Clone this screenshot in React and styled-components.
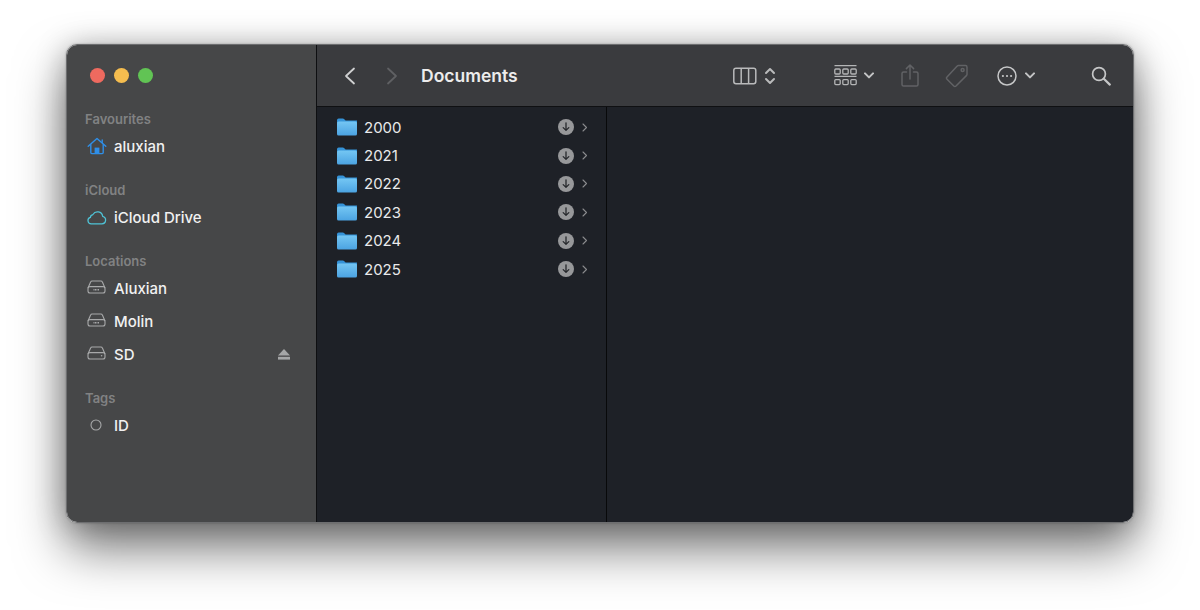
import React from "react";
import styled, { createGlobalStyle } from "styled-components";

const Global = createGlobalStyle`
  html, body { margin: 0; padding: 0; background: #fff; }
  body { width: 1200px; height: 610px; overflow: hidden; font-family: Inter, "Liberation Sans", sans-serif; }
`;
const Page = styled.div`
  width: 1200px; height: 610px; box-sizing: border-box; padding: 44px 66px 87px;
`;
const Window = styled.div`
  height: 479px; display: flex; border-radius: 11px; overflow: hidden; box-sizing: border-box;
  border: 1px solid #6d6e70;
  box-shadow: 0 26px 50px rgba(0,0,0,.52), 0 2px 30px rgba(0,0,0,.26), 0 0 2px rgba(0,0,0,.3);
`;
const Sidebar = styled.aside`
  width: 250px; flex: none; background: #464748; box-sizing: border-box;
  border-right: 1px solid #0e0f11; display: flex; flex-direction: column;
  padding: 23px 0 0 18px;
`;
const Lights = styled.div`display: flex; gap: 9px; padding-left: 5px; height: 41px;`;
const Light = styled.span`
  width: 15px; height: 15px; border-radius: 50%; background: ${p => p.$c};
`;
const Section = styled.section`display: flex; flex-direction: column; margin-bottom: 17px;`;
const Label = styled.div`
  height: 21px; line-height: 21px; font-size: 13px; font-weight: 600; color: #818283;
`;
const Row = styled.div`
  height: 33px; box-sizing: border-box; padding: 0 26px 1px 0; display: flex; align-items: center;
  font-size: 15px; font-weight: 500; color: #f1f1f1;
`;
const RowIcon = styled.span`
  width: 29px; flex: none; display: flex; justify-content: flex-start; padding-left: 2px; box-sizing: border-box;
`;
const Spacer = styled.span`flex: 1;`;
const Main = styled.main`flex: 1; display: flex; flex-direction: column; min-width: 0;`;
const Toolbar = styled.header`
  height: 62px; flex: none; box-sizing: border-box; background: #3a3b3e; border-bottom: 1px solid #0f1012;
  display: flex; align-items: center; position: relative; padding-left: 27px;
`;
const NavGroup = styled.div`display: flex; align-items: center; gap: 30px; width: 77px;`;
const Title = styled.h1`
  margin: 0 0 1px; font-size: 17.5px; font-weight: 600; color: #ececec; letter-spacing: 0;
`;
const Tools = styled.div`
  margin-left: auto; display: flex; align-items: center; padding-right: 22px;
`;
const Tool = styled.span`display: flex; align-items: center; gap: ${p => p.$gap || 6}px; margin-left: ${p => p.$ml || 0}px;`;
const Columns = styled.div`flex: 1; display: flex; min-height: 0; background: #1e2127;`;
const ListColumn = styled.div`
  width: 290px; flex: none; box-sizing: border-box; border-right: 1px solid #08090a; padding-top: 6px;
`;
const FileRow = styled.div`
  height: 28.4px; display: flex; align-items: center; padding-left: 20px; padding-right: 18px;
  font-size: 15px; color: #e9eaeb; font-weight: 400;
`;
const FileName = styled.span`margin-left: 7px; flex: 1;`;
const Preview = styled.div`flex: 1;`;

const Home = () => (
  <svg width="20" height="18" viewBox="0 0 20 18" fill="none" stroke="#2f8fe8" strokeWidth="1.4" strokeLinecap="round" strokeLinejoin="round">
    <path d="M1.2 9.2 10 1.4l8.8 7.8" />
    <path d="M15.2 3v2.6" />
    <path d="M3.8 7.6v8a1 1 0 0 0 1 1h10.4a1 1 0 0 0 1-1v-8" />
    <rect x="7.6" y="10.6" width="4.8" height="6" fill="#2f8fe8" stroke="none" />
  </svg>
);
const Cloud = () => (
  <svg width="21" height="15" viewBox="0 0 20 14" fill="none" stroke="#4fc3d6" strokeWidth="1.2" style={{ marginLeft: -1 }}>
    <path d="M5 13h10.2a3.6 3.6 0 0 0 .7-7.1A5 5 0 0 0 6.6 4.2 2.9 2.9 0 0 0 4.2 6.9 3.1 3.1 0 0 0 5 13Z" strokeLinejoin="round" />
  </svg>
);
const Drive = ({ slots }) => (
  <svg width="19" height="14" viewBox="0 0 19 14" fill="none" stroke="#a8a9aa" strokeWidth="1.1" style={{ marginBottom: 2 }}>
    <path d="M1 8 3.6 2a1.6 1.6 0 0 1 1.5-1h8.8a1.6 1.6 0 0 1 1.5 1L18 8" />
    <rect x="1" y="6.6" width="17" height="6.4" rx="2" />
    {slots
      ? <path d="M6.5 9.8h6" strokeWidth="1.6" strokeDasharray="1 .5" />
      : <circle cx="14.6" cy="9.8" r=".8" fill="#a8a9aa" stroke="none" />}
  </svg>
);
const Eject = () => (
  <svg width="12" height="11" viewBox="0 0 12 11" fill="#a5a6a7">
    <path d="M6 0 12 6.4H0Z" />
    <rect x="0" y="7.8" width="12" height="2.8" />
  </svg>
);
const TagDot = () => (
  <svg width="16" height="16" viewBox="0 0 16 16" fill="none" stroke="#a6a7a8" strokeWidth="1.1">
    <circle cx="9" cy="8" r="5" />
  </svg>
);
const Back = ({ color }) => (
  <svg width="12" height="18" viewBox="0 0 12 18" fill="none" stroke={color} strokeWidth="1.8" strokeLinecap="round" strokeLinejoin="round">
    <path d="M10 1.5 2 9l8 7.5" />
  </svg>
);
const Forward = ({ color }) => (
  <svg width="12" height="18" viewBox="0 0 12 18" fill="none" stroke={color} strokeWidth="1.8" strokeLinecap="round" strokeLinejoin="round">
    <path d="m2 1.5 8 7.5-8 7.5" />
  </svg>
);
const ColumnView = () => (
  <svg width="24" height="18" viewBox="0 0 24 18" fill="none" stroke="#b9babb" strokeWidth="1.5">
    <rect x=".8" y="1.2" width="22" height="15.6" rx="2.2" />
    <path d="M8.2 1.2v15.6M15.6 1.2v15.6" />
  </svg>
);
const Updown = () => (
  <svg width="12" height="18" viewBox="0 0 12 18" fill="none" stroke="#b9babb" strokeWidth="2" strokeLinecap="round" strokeLinejoin="round">
    <path d="m2 6 4-4 4 4M2 12l4 4 4-4" />
  </svg>
);
const GroupIcon = () => (
  <svg width="23" height="21" viewBox="0 0 23 21" fill="none" stroke="#b4b5b6" strokeWidth="1.3">
    <path d="M.5.7h22" />
    <rect x=".8" y="4" width="5.4" height="5" rx="1" />
    <rect x="8.8" y="4" width="5.4" height="5" rx="1" />
    <rect x="16.8" y="4" width="5.4" height="5" rx="1" />
    <path d="M.5 11.3h22" />
    <rect x=".8" y="14.6" width="5.4" height="5" rx="1" />
    <rect x="8.8" y="14.6" width="5.4" height="5" rx="1" />
    <rect x="16.8" y="14.6" width="5.4" height="5" rx="1" />
  </svg>
);
const Chevron = () => (
  <svg width="10" height="7" viewBox="0 0 10 7" fill="none" stroke="#c3c4c5" strokeWidth="2" strokeLinecap="round" strokeLinejoin="round">
    <path d="m1 1.4 4 4 4-4" />
  </svg>
);
const Share = () => (
  <svg width="18" height="23" viewBox="0 0 18 23" fill="none" stroke="#616265" strokeWidth="1.5" strokeLinecap="round" strokeLinejoin="round">
    <path d="M5.5 8H2.6A1.6 1.6 0 0 0 1 9.6v10.8A1.6 1.6 0 0 0 2.6 22h12.8a1.6 1.6 0 0 0 1.6-1.6V9.6A1.6 1.6 0 0 0 15.4 8h-2.9" />
    <path d="M9 15V1.2M5.4 4.6 9 1l3.6 3.6" />
  </svg>
);
const Tag = () => (
  <svg width="24" height="24" viewBox="0 0 24 24" fill="none" stroke="#616265" strokeWidth="1.5" strokeLinejoin="round">
    <path d="M13.4 1.6h7a1.6 1.6 0 0 1 1.6 1.6v7a2 2 0 0 1-.6 1.4L11 22a1.6 1.6 0 0 1-2.2 0L2 15.2A1.6 1.6 0 0 1 2 13L12 2.2a2 2 0 0 1 1.4-.6Z" />
    <circle cx="17.6" cy="6" r="1.5" />
  </svg>
);
const More = () => (
  <svg width="20" height="20" viewBox="0 0 20 20" fill="none" stroke="#c5c6c7" strokeWidth="1.5">
    <circle cx="10" cy="10" r="9" />
    <circle cx="5.9" cy="10" r="1.1" fill="#c5c6c7" stroke="none" />
    <circle cx="10" cy="10" r="1.1" fill="#c5c6c7" stroke="none" />
    <circle cx="14.1" cy="10" r="1.1" fill="#c5c6c7" stroke="none" />
  </svg>
);
const Search = () => (
  <svg width="20" height="20" viewBox="0 0 20 20" fill="none" stroke="#c5c6c7" strokeWidth="1.7" strokeLinecap="round">
    <circle cx="8" cy="8" r="6.4" />
    <path d="m12.8 12.8 6 5.8" strokeWidth="2.2" />
  </svg>
);
const Folder = ({ id }) => (
  <svg width="20" height="18" viewBox="0 0 20 18" style={{ flex: "none" }}>
    <defs>
      <linearGradient id={id} x1="0" y1="0" x2="0" y2="1">
        <stop offset="0" stopColor="#74c6f3" />
        <stop offset="1" stopColor="#4ba3e2" />
      </linearGradient>
    </defs>
    <path d="M0 2.2A1.6 1.6 0 0 1 1.6.6h4.2c.7 0 1 .2 1.5.7l1.3 1.3H20v3H0Z" fill="#3593d8" />
    <rect x="0" y="3.6" width="20" height="14" rx="1.6" fill={`url(#${id})`} />
  </svg>
);
const Download = () => (
  <svg width="16" height="16" viewBox="0 0 16 16" style={{ flex: "none" }}>
    <circle cx="8" cy="8" r="8" fill="#97989a" />
    <path d="M8 3.8v7.4M5.2 8.6 8 11.4l2.8-2.8" fill="none" stroke="#26282c" strokeWidth="1.3" strokeLinecap="round" strokeLinejoin="round" />
  </svg>
);
const Disclosure = () => (
  <svg width="6" height="9" viewBox="0 0 6 9" fill="none" stroke="#8a8b8d" strokeWidth="1.1" strokeLinecap="round" strokeLinejoin="round" style={{ marginLeft: 8, flex: "none" }}>
    <path d="m1 1 3.5 3.5L1 8" />
  </svg>
);

const years = ["2000", "2021", "2022", "2023", "2024", "2025"];

export default function App() {
  return (
    <>
      <Global />
      <Page>
        <Window>
          <Sidebar>
            <Lights>
              <Light $c="#ee6a5f" />
              <Light $c="#f5bd4f" />
              <Light $c="#61c454" />
            </Lights>
            <Section>
              <Label>Favourites</Label>
              <Row><RowIcon><Home /></RowIcon>aluxian</Row>
            </Section>
            <Section>
              <Label>iCloud</Label>
              <Row><RowIcon><Cloud /></RowIcon>iCloud Drive</Row>
            </Section>
            <Section>
              <Label>Locations</Label>
              <Row><RowIcon><Drive slots /></RowIcon>Aluxian</Row>
              <Row><RowIcon><Drive slots /></RowIcon>Molin</Row>
              <Row><RowIcon><Drive /></RowIcon>SD<Spacer /><Eject /></Row>
            </Section>
            <Section>
              <Label>Tags</Label>
              <Row><RowIcon><TagDot /></RowIcon>ID</Row>
            </Section>
          </Sidebar>
          <Main>
            <Toolbar>
              <NavGroup>
                <Back color="#cfd0d1" />
                <Forward color="#5f6063" />
              </NavGroup>
              <Title>Documents</Title>
              <Tools>
                <Tool $gap={7}><ColumnView /><Updown /></Tool>
                <Tool $gap={7} $ml={58}><GroupIcon /><Chevron /></Tool>
                <Tool $ml={27}><Share /></Tool>
                <Tool $ml={26}><Tag /></Tool>
                <Tool $gap={8} $ml={28}><More /><Chevron /></Tool>
                <Tool $ml={56}><Search /></Tool>
              </Tools>
            </Toolbar>
            <Columns>
              <ListColumn>
                {years.map(y => (
                  <FileRow key={y}>
                    <Folder id={`folder-${y}`} />
                    <FileName>{y}</FileName>
                    <Download />
                    <Disclosure />
                  </FileRow>
                ))}
              </ListColumn>
              <Preview />
            </Columns>
          </Main>
        </Window>
      </Page>
    </>
  );
}
